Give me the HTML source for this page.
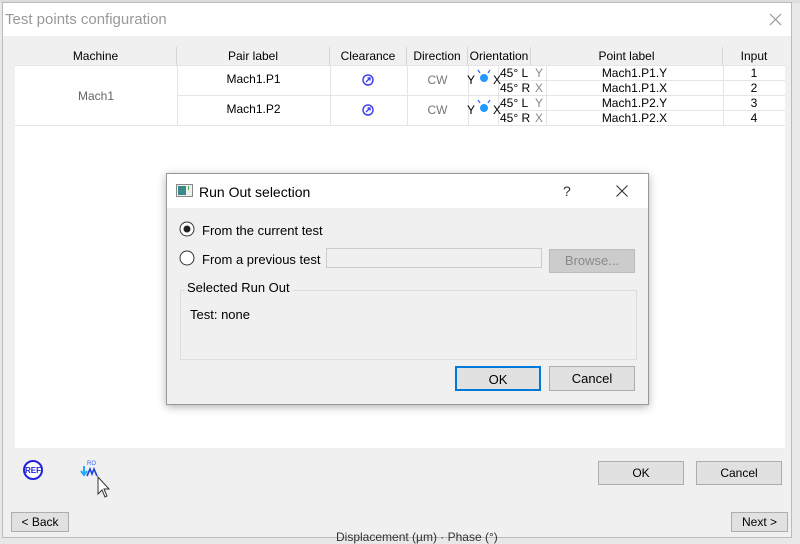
<!DOCTYPE html><html><head><style>
*{box-sizing:border-box}body{margin:0;width:800px;height:540px;background:#e8e8e8;font-family:"Liberation Sans",sans-serif;font-size:12px;color:#000;position:relative;overflow:hidden}
.a{position:absolute}
.win{left:2px;top:2px;width:790px;height:536px;background:#f0f0f0;border:1px solid #bbb}
.tb{left:0;top:0;width:788px;height:33px;background:#fff}
.t{white-space:nowrap}
.tbl{left:12px;top:44px;width:770px;height:401px;background:#fff}
.hd{background:#f0f0f0;border-right:1px solid #d5d5d5;height:18px;top:0;text-align:center;line-height:18px}
.c{text-align:center}
.btn{background:#e1e1e1;border:1px solid #adadad;text-align:center}
.ln{background:#e5e5e5}
</style></head><body>
<div class="a" style="left:0;top:0;width:800px;height:3px;background:#ddd"></div>
<div class="a win">
<div class="a tb"><div class="a t" style="left:2px;top:8px;font-size:15px;color:#999">Test points configuration</div>
<svg class="a" style="left:766px;top:10px" width="13" height="13"><path d="M1 1L12 12M12 1L1 12" stroke="#999" stroke-width="1.2"/></svg></div>
<div class="a tbl">
<div class="a hd" style="left:0;width:162px">Machine</div>
<div class="a hd" style="left:162px;width:153px">Pair label</div>
<div class="a hd" style="left:315px;width:77px">Clearance</div>
<div class="a hd" style="left:392px;width:61px">Direction</div>
<div class="a hd" style="left:453px;width:63px">Orientation</div>
<div class="a hd" style="left:516px;width:192px">Point label</div>
<div class="a hd" style="left:708px;width:62px;border-right:0">Input</div>
<div class="a ln" style="left:0;top:18px;width:770px;height:1px"></div>
<div class="a ln" style="left:0;top:78px;width:770px;height:1px"></div>
<div class="a ln" style="left:162px;top:48px;width:608px;height:1px"></div>
<div class="a ln" style="left:483px;top:33px;width:287px;height:1px"></div>
<div class="a ln" style="left:483px;top:63px;width:287px;height:1px"></div>
<div class="a ln" style="left:162px;top:18px;width:1px;height:60px"></div>
<div class="a ln" style="left:315px;top:18px;width:1px;height:60px"></div>
<div class="a ln" style="left:392px;top:18px;width:1px;height:60px"></div>
<div class="a ln" style="left:453px;top:18px;width:1px;height:60px"></div>
<div class="a ln" style="left:483px;top:18px;width:1px;height:60px"></div>
<div class="a ln" style="left:531px;top:18px;width:1px;height:60px"></div>
<div class="a ln" style="left:708px;top:18px;width:1px;height:60px"></div>
<div class="a t c" style="left:0;width:162px;top:42px;color:#666">Mach1</div>
<div class="a t c" style="left:162px;width:153px;top:25px">Mach1.P1</div>
<div class="a t c" style="left:162px;width:153px;top:55px">Mach1.P2</div>
<svg class="a" style="left:347px;top:27px" width="12" height="12"><circle cx="6" cy="6" r="5" fill="none" stroke="#4444ee" stroke-width="1.5"/><path d="M4 8L8 4M5.5 4H8V6.5" stroke="#4444ee" stroke-width="1.4" fill="none"/></svg>
<svg class="a" style="left:347px;top:57px" width="12" height="12"><circle cx="6" cy="6" r="5" fill="none" stroke="#4444ee" stroke-width="1.5"/><path d="M4 8L8 4M5.5 4H8V6.5" stroke="#4444ee" stroke-width="1.4" fill="none"/></svg>
<div class="a t c" style="left:392px;width:61px;top:26px;color:#777">CW</div>
<div class="a t c" style="left:392px;width:61px;top:56px;color:#777">CW</div>
<div class="a t" style="left:452px;top:26px">Y</div><div class="a t" style="left:478px;top:26px">X</div>
<div class="a t" style="left:452px;top:56px">Y</div><div class="a t" style="left:478px;top:56px">X</div>
<svg class="a" style="left:460px;top:20px" width="18" height="18"><path d="M3 3L5 6M15 3L13 6" stroke="#3366ff" stroke-width="1.2"/><circle cx="9" cy="11" r="4" fill="#2299ff"/></svg>
<svg class="a" style="left:460px;top:50px" width="18" height="18"><path d="M3 3L5 6M15 3L13 6" stroke="#3366ff" stroke-width="1.2"/><circle cx="9" cy="11" r="4" fill="#2299ff"/></svg>
<div class="a t" style="left:485px;top:19px">45° L</div><div class="a t" style="left:485px;top:34px">45° R</div>
<div class="a t" style="left:485px;top:49px">45° L</div><div class="a t" style="left:485px;top:64px">45° R</div>
<div class="a t" style="left:520px;top:19px;color:#888">Y</div><div class="a t" style="left:520px;top:34px;color:#888">X</div>
<div class="a t" style="left:520px;top:49px;color:#888">Y</div><div class="a t" style="left:520px;top:64px;color:#888">X</div>
<div class="a t c" style="left:531px;width:177px;top:19px">Mach1.P1.Y</div><div class="a t c" style="left:531px;width:177px;top:34px">Mach1.P1.X</div>
<div class="a t c" style="left:531px;width:177px;top:49px">Mach1.P2.Y</div><div class="a t c" style="left:531px;width:177px;top:64px">Mach1.P2.X</div>
<div class="a t c" style="left:708px;width:62px;top:19px">1</div><div class="a t c" style="left:708px;width:62px;top:34px">2</div>
<div class="a t c" style="left:708px;width:62px;top:49px">3</div><div class="a t c" style="left:708px;width:62px;top:64px">4</div>
</div>
<svg class="a" style="left:19px;top:456px" width="22" height="22"><circle cx="11" cy="11" r="9" fill="#fff" stroke="#2222dd" stroke-width="2"/><text x="11" y="14" font-size="8" font-weight="bold" fill="#2222dd" text-anchor="middle" font-family="Liberation Sans">REF</text></svg>
<svg class="a" style="left:76px;top:455px" width="22" height="22"><text x="8" y="7" font-size="6" fill="#3366ff" font-family="Liberation Sans">RO</text><path d="M5 8V17M2 13L5 17L8 13" stroke="#22aaff" stroke-width="2" fill="none"/><path d="M8 18L11 11L13 16L15 11L18 18" stroke="#2244dd" stroke-width="1.6" fill="none"/></svg>
<svg class="a" style="left:94px;top:473px" width="16" height="24"><path d="M1 1V18L5 14L8 21L10 20L7 13H12Z" fill="#fff" stroke="#333"/></svg>
<div class="a btn" style="left:595px;top:458px;width:86px;height:24px;line-height:22px">OK</div>
<div class="a btn" style="left:693px;top:458px;width:86px;height:24px;line-height:22px">Cancel</div>
<div class="a btn" style="left:8px;top:509px;width:58px;height:20px;line-height:18px">&lt; Back</div>
<div class="a btn" style="left:728px;top:509px;width:57px;height:20px;line-height:18px">Next &gt;</div>
</div>
<div class="a" style="left:166px;top:173px;width:483px;height:232px;background:#f0f0f0;border:1px solid #999;box-shadow:0 2px 8px rgba(0,0,0,.3)">
<div class="a" style="left:0;top:0;width:481px;height:34px;background:#fff"></div>
<svg class="a" style="left:9px;top:10px" width="17" height="13"><rect x=".5" y=".5" width="16" height="12" fill="#eee" stroke="#888"/><rect x="2" y="2" width="8" height="9" fill="#3a8a8a"/><rect x="12" y="2" width="1" height="4" fill="#4a4"/></svg>
<div class="a t" style="left:32px;top:10px;font-size:14px">Run Out selection</div>
<div class="a t" style="left:396px;top:9px;font-size:14px;color:#333">?</div>
<svg class="a" style="left:449px;top:11px" width="12" height="12"><path d="M.5 .5L11.5 11.5M11.5 .5L.5 11.5" stroke="#333" stroke-width="1.1"/></svg>
<svg class="a" style="left:12px;top:47px" width="16" height="16"><circle cx="8" cy="8" r="7" fill="#fff" stroke="#333"/><circle cx="8" cy="8" r="3.5" fill="#222"/></svg>
<div class="a t" style="left:35px;top:49px;font-size:13px">From the current test</div>
<svg class="a" style="left:12px;top:76px" width="16" height="16"><circle cx="8" cy="8" r="7" fill="#fff" stroke="#333"/></svg>
<div class="a t" style="left:35px;top:78px;font-size:13px">From a previous test</div>
<div class="a" style="left:159px;top:74px;width:216px;height:20px;background:#f0f0f0;border:1px solid #ccc"></div>
<div class="a t" style="left:382px;top:75px;width:86px;height:24px;background:#ccc;border:1px solid #bbb;color:#888;text-align:center;line-height:22px;font-size:13px">Browse...</div>
<div class="a" style="left:13px;top:116px;width:457px;height:70px;border:1px solid #ddd"></div>
<div class="a t" style="left:17px;top:106px;font-size:13px;background:#f0f0f0;padding:0 3px">Selected Run Out</div>
<div class="a t" style="left:23px;top:133px;font-size:13px">Test: none</div>
<div class="a btn" style="left:288px;top:192px;width:86px;height:25px;line-height:23px;border:2px solid #0078d7;font-size:13px">OK</div>
<div class="a btn" style="left:382px;top:192px;width:86px;height:25px;line-height:23px;font-size:13px">Cancel</div>
</div>
<div class="a t" style="left:336px;top:530px;color:#333;font-size:12px">Displacement (µm) · Phase (°)</div>
</body></html>
